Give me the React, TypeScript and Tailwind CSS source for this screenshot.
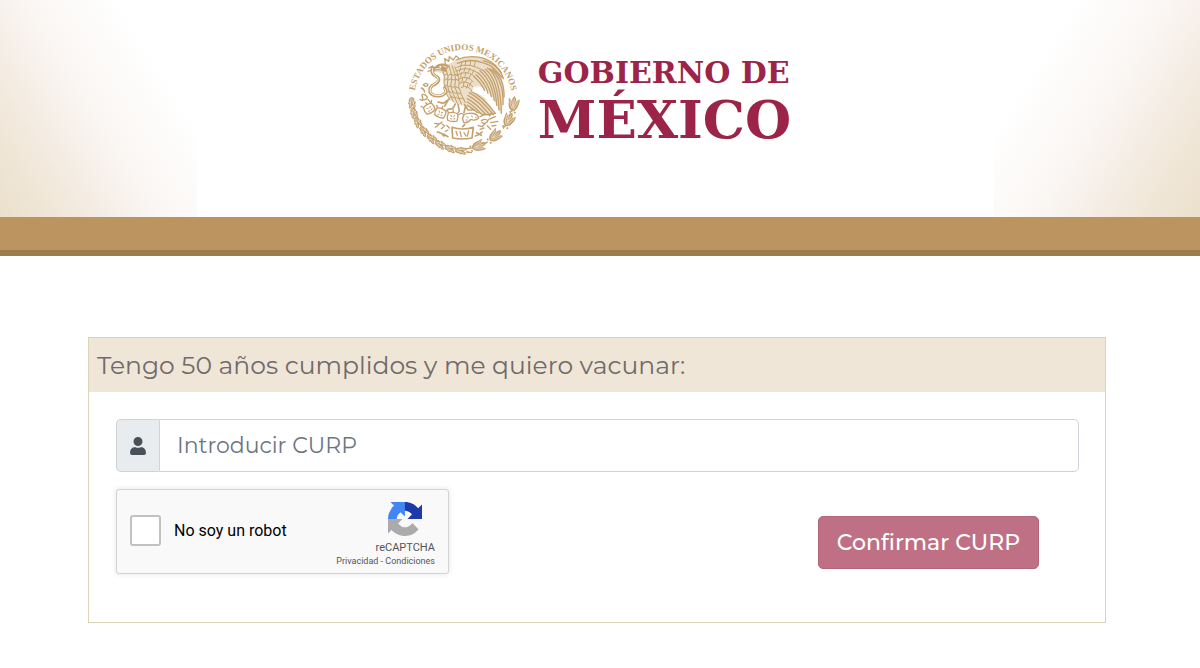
import { useState } from "react";

const GOLD = "#c4a06c";

type Sprig = { x: number; y: number; angle: number };

// oak sprigs on the left half of the wreath
const oakSprigs: Sprig[] = [
  { x: 36, y: 202, angle: 80 },
  { x: 42, y: 232, angle: 70 },
  { x: 54, y: 260, angle: 60 },
  { x: 73, y: 286, angle: 48 },
  { x: 96, y: 308, angle: 38 },
  { x: 122, y: 326, angle: 28 },
  { x: 152, y: 338, angle: 16 },
  { x: 184, y: 344, angle: 4 },
];

// laurel on the right half, each cluster opening away from the ribbon
const laurelSprigs: Sprig[] = [
  { x: 341, y: 203, angle: -82 },
  { x: 327, y: 250, angle: -64 },
  { x: 287, y: 298, angle: -42 },
  { x: 238, y: 329, angle: -20 },
];

const wingFeathers = [
  "M168 72Q212 54 254 68Q296 84 309 124",
  "M172 82Q208 66 248 80Q270 86 284 100L310 128",
  "M250 74Q288 84 304 112",
  "M262 96Q302 122 304 232",
  "M256 100Q294 130 297 222",
  "M248 102Q286 134 290 208",
  "M240 104Q276 134 283 194",
  "M234 110Q266 138 274 182",
  "M228 116Q256 140 264 172",
  "M222 122Q244 140 254 164",
  "M270 98Q312 130 309 206",
  "M278 100Q314 128 312 184",
];

const covertFeathers = [
  "M170 94q20-10 40-6q20 4 36 14",
  "M168 106q22-12 42-6q12 4 22 10",
  "M170 118q20-12 38-6q10 4 18 12",
  "M174 130q16-10 30-4q10 4 16 12",
  "M178 142q14-8 26-2q8 4 14 12",
  "M184 154q10-6 20 0q8 4 12 10",
  "M186 78l-4 14M198 75l-3 14M212 74l-2 14M226 78l-4 14",
  "M182 96l-4 12M196 94l-4 12M210 97l-5 12M222 102l-6 12",
  "M184 110l-2 12M198 109l-3 12M212 116l-6 12",
  "M188 124l-2 12M202 124l-5 12M214 138l-6 12",
  "M192 138l-2 12M204 144l-4 12",
];

const tailFeathers = [
  "M214 166Q248 182 286 232",
  "M208 170Q244 190 280 236",
  "M204 178Q238 196 270 238",
  "M202 188Q230 204 258 236",
  "M202 198Q222 210 244 234",
  "M202 208Q216 216 230 228",
  "M286 232Q258 242 230 228",
];

const bodyFeathers = [
  "M128 102Q136 122 132 140Q134 170 150 192",
  "M138 98Q148 122 142 146Q146 172 160 198",
  "M148 94Q160 122 152 148Q158 174 172 202",
  "M156 90Q172 124 164 150Q172 176 184 204",
  "M164 92Q182 128 176 152Q182 174 196 200",
  "M132 118q8-8 14 0q8-8 14 0q8-6 14 0",
  "M134 132q8-8 12 0q8-8 14 0q8-6 16 2",
  "M134 150q8-6 12 2q8-6 12 2q8-6 18 2",
  "M142 168q6-6 12 2q8-6 12 2q8-4 16 2",
  "M150 184q6-6 12 2q8-6 12 2q8-4 18 2",
];

const cactusPads = [
  { x: 88, y: 218, angle: -30 },
  { x: 121, y: 231, angle: 20 },
  { x: 158, y: 243, angle: 5 },
];

function OakSprig({ x, y, angle }: Sprig) {
  return (
    <g transform={`translate(${x} ${y}) rotate(${angle})`}>
      <path
        d="M-19 -1Q-15 -12 -7 -8Q-2 -15 4 -9Q12 -12 18 -3Q12 -1 6 0Q13 3 16 9Q8 14 3 9Q-3 14 -8 8Q-15 9 -19 -1Z"
        fill={GOLD}
      />
      <path
        d="M-14 -1Q-2 -5 11 -5M-12 2Q-2 2 9 7M-5 -9l3 6M-5 9l3-5"
        stroke="#fff"
        strokeWidth="1.5"
      />
      <circle cx="18" cy="3" r="3" fill={GOLD} />
    </g>
  );
}

function LaurelSprig({ x, y, angle }: Sprig) {
  return (
    <g transform={`translate(${x} ${y}) rotate(${angle})`}>
      <path
        d="M-24 0Q-18 -16 2 -15L16 -17Q12 -11 7 -7Q16 -8 23 0Q16 6 7 7Q12 10 16 16Q4 18 -6 14Q-18 12 -24 0Z"
        fill={GOLD}
      />
      <path
        d="M-18 0H14M-15 -4Q-5 -10 8 -12M-15 4Q-5 10 8 12M-10 -1Q-2 -5 8 -6M-10 1Q-2 5 8 6"
        stroke="#fff"
        strokeWidth="1.5"
      />
      <circle cx="-26" cy="-7" r="3" fill={GOLD} />
      <circle cx="-26" cy="7" r="3" fill={GOLD} />
    </g>
  );
}

function Emblem() {
  return (
    <svg
      className="h-[126px] w-[126px] shrink-0"
      viewBox="0 0 378 378"
      fill="none"
      strokeLinecap="round"
      strokeLinejoin="round"
      role="img"
      aria-label="Escudo Nacional"
    >
      <path id="motto" d="M43 188A146 146 0 0 1 335 188" />
      <text fill={GOLD} fontFamily="Liberation Serif, serif" fontSize="27" fontWeight="bold">
        <textPath href="#motto" startOffset="50%" textAnchor="middle">
          ESTADOS UNIDOS MEXICANOS
        </textPath>
      </text>

      {/* soft fill under the plumage */}
      <path
        d="M166 74Q212 52 258 70Q312 92 312 180L304 234L282 190Q262 152 230 150L286 232Q240 242 200 210Q168 208 148 188Q126 160 132 116Q118 106 104 108Q90 94 106 92Q120 78 146 84Z"
        fill="#ecdfc9"
      />

      {/* wings and tail */}
      <g stroke={GOLD} strokeWidth="4">
        {[...wingFeathers, ...tailFeathers].map((d) => (
          <path key={d} d={d} />
        ))}
      </g>
      <g stroke={GOLD} strokeWidth="3">
        {[...covertFeathers, ...bodyFeathers].map((d) => (
          <path key={d} d={d} />
        ))}
      </g>
      <path
        d="M136 84L134 68L146 76L148 62L160 72L168 60L178 68"
        stroke={GOLD}
        strokeWidth="4"
      />
      <path d="M222 152Q262 156 288 222Q266 184 216 166Z" fill="#fff" />

      {/* head */}
      <path
        d="M98 112Q90 98 104 92Q118 78 138 84L150 90Q140 96 138 108Q124 104 112 102Q102 104 98 112Z"
        fill={GOLD}
      />
      <circle cx="121" cy="92" r="3" fill="#fff" />
      <path d="M106 99q8-4 16 0M130 90l10 4" stroke="#fff" strokeWidth="2" />

      {/* snake */}
      <path
        d="M97 94Q92 114 110 122Q124 132 106 144Q86 152 90 168Q98 184 126 178Q144 170 134 156"
        stroke={GOLD}
        strokeWidth="10"
      />
      <path
        d="M97 98Q95 114 111 123Q120 132 105 143Q87 152 91 168Q98 182 126 177Q142 170 134 158"
        stroke="#fff"
        strokeWidth="3"
      />
      <path d="M86 96l12-6M84 106l10-4" stroke={GOLD} strokeWidth="4" />

      {/* prickly pears on the left */}
      <path
        d="M70 146q8-8 14 0q-4 10-14 0M64 156q8 2 10 12M66 176q10-4 16 8q-6 12-14 4zM84 190l8 10M60 190l8 4"
        stroke={GOLD}
        strokeWidth="4"
      />

      {/* talons */}
      <path
        d="M146 190l-16 12-16-4M144 194l-10 16M166 204l-8 14-14 2M174 206l4 18M194 206l10 16 18 0M196 212l-4 18"
        stroke={GOLD}
        strokeWidth="5"
      />

      {/* nopal */}
      <g stroke={GOLD} strokeWidth="4">
        {cactusPads.map(({ x, y, angle }) => (
          <g key={x} transform={`translate(${x} ${y}) rotate(${angle})`}>
            <path d="M-14 -11Q0 -17 14 -11Q18 0 14 11Q0 16 -14 11Q-18 0 -14 -11Z" fill="#fff" />
            <path d="M-6 -5l3 4M6 -5l-3 4M-6 6h4M4 6l3-2" strokeWidth="3" />
            <path d="M-14 -13l-4-5M0 -15v-6M14 -13l4-5" />
          </g>
        ))}
        <path d="M188 250Q188 232 206 232Q232 230 236 246Q226 256 212 250Q204 262 192 260Z" fill="#fff" />
        <path d="M200 242l5 3M214 240l4 3M226 244l3 2M198 252h4" strokeWidth="3" />
        <path d="M176 236q8-8 14 0M240 242l14-6M244 254q12-8 20 0q-6 12-18 6M266 250l20-8M272 260l22-4M268 240l4-8" />
        <path d="M104 262l14 2 8-6M106 274l10-8M124 278l10-8-8-6M140 268l8 8M136 286l8-4" />
        <path d="M234 268l12 4 8-8M240 280l12-4M262 270l10 10M276 270l12-2" />
      </g>

      {/* stone over the water */}
      <path
        d="M156 274Q186 284 220 274L216 306Q186 312 158 306Z"
        fill="#fff"
        stroke={GOLD}
        strokeWidth="5"
      />
      <path
        d="M168 286l4 12M180 286l4 16M192 290l6 10M206 284l-4 16"
        stroke={GOLD}
        strokeWidth="4"
      />
      <path
        d="M112 288q14 2 20 12M130 294l14 8M226 300q12-2 20-12M230 290l14 8M194 266l-6 6"
        stroke={GOLD}
        strokeWidth="5"
      />

      {/* wreath */}
      {oakSprigs.map((sprig) => (
        <OakSprig key={sprig.x} {...sprig} />
      ))}
      {laurelSprigs.map((sprig) => (
        <LaurelSprig key={sprig.x} {...sprig} />
      ))}
      <path d="M200 338l14-2M202 348l12 2M310 276l6-8M262 318l-6 4M334 226l2-6" stroke={GOLD} strokeWidth="4" />
    </svg>
  );
}

function RecaptchaLogo() {
  return (
    <svg className="h-[34px] w-[34px]" viewBox="0 0 64 64" aria-hidden="true">
      <path
        d="M64 31.955l-.033-1.37V4.687l-7.16 7.16C50.948 4.674 42.033.093 32.05.093c-10.4 0-19.622 4.96-25.458 12.64l11.736 11.86a15.55 15.55 0 0 1 4.754-5.334c2.05-1.6 4.952-2.906 8.968-2.906.485 0 .86.057 1.135.163 4.976.393 9.288 3.14 11.828 7.124l-8.307 8.307L64 31.953"
        fill="#1c3aa9"
      />
      <path
        d="M31.862.094l-1.37.033H4.594l7.16 7.16C4.58 13.147 0 22.06 0 32.046c0 10.4 4.96 19.622 12.64 25.458L24.5 45.768a15.55 15.55 0 0 1-5.334-4.754c-1.6-2.05-2.906-4.952-2.906-8.968 0-.485.057-.86.163-1.135.393-4.976 3.14-9.288 7.124-11.828l8.307 8.307L31.86.095"
        fill="#4285f4"
      />
      <path
        d="M.001 32.045l.033 1.37v25.898l7.16-7.16c5.86 7.173 14.774 11.754 24.76 11.754 10.4 0 19.622-4.96 25.458-12.64l-11.736-11.86a15.55 15.55 0 0 1-4.754 5.334c-2.05 1.6-4.952 2.906-8.968 2.906-.485 0-.86-.057-1.135-.163-4.976-.393-9.288-3.14-11.828-7.124l8.307-8.307c-10.522.04-22.4.066-27.295-.005"
        fill="#ababab"
      />
    </svg>
  );
}

function Header() {
  return (
    <header>
      <div className="flex h-[217px] justify-between bg-white">
        <div className="w-[197px] bg-[linear-gradient(58deg,#ebe0ca_0%,#f3eadf_25%,#faf6f3_48%,#ffffff_76%)]" />
        <div className="flex items-start gap-3 pt-9">
          <Emblem />
          <h1 className="flex flex-col pt-[19px] font-['DejaVu_Serif',serif] font-bold whitespace-nowrap text-[#9d2449]">
            <span className="text-[30px] leading-9">GOBIERNO DE</span>
            <span className="text-[53px] leading-[56px]">MÉXICO</span>
          </h1>
        </div>
        <div className="w-[206px] bg-[linear-gradient(-58deg,#ebe0ca_0%,#f3eadf_25%,#faf6f3_48%,#ffffff_76%)]" />
      </div>
      <div className="h-[39px] border-b-6 border-[#9c7e4d] bg-[#bb945f]" />
    </header>
  );
}

function Recaptcha() {
  const [checked, setChecked] = useState(false);

  return (
    <div className="flex h-[85px] w-[333px] justify-between rounded-[3px] border border-[#d3d3d3] bg-[#f9f9f9] pr-[13px] pl-[13px] font-[Roboto,sans-serif] shadow-[0_0_4px_1px_rgba(0,0,0,0.08)]">
      <label className="flex items-center gap-[13px] pb-[2px] text-base text-black">
        <input
          type="checkbox"
          checked={checked}
          onChange={(e) => setChecked(e.target.checked)}
          className="h-[31px] w-[31px] appearance-none rounded-[3px] border-2 border-[#c1c1c1] bg-white checked:bg-[#4285f4]"
        />
        No soy un robot
      </label>
      <div className="flex flex-col items-end pt-3 text-[#555555]">
        <div className="pr-[13px]">
          <RecaptchaLogo />
        </div>
        <span className="pt-[5px] text-[11px] leading-[14px]">reCAPTCHA</span>
        <span className="text-[9px] leading-3 whitespace-nowrap">
          <a href="#privacidad">Privacidad</a> - <a href="#condiciones">Condiciones</a>
        </span>
      </div>
    </div>
  );
}

export default function App() {
  const [curp, setCurp] = useState("");

  return (
    <div className="min-h-screen bg-white font-['Montserrat','Inter',sans-serif]">
      <Header />

      <main className="pt-[81px] pr-[94px] pb-11 pl-22">
        <form
          className="border border-[#ddd3b8]"
          onSubmit={(e) => e.preventDefault()}
        >
          <h2 className="bg-[#efe6d7] px-2 py-[9px] text-[25px] leading-9 text-[#706b6b]">
            Tengo 50 años cumplidos y me quiero vacunar:
          </h2>

          <div className="pt-[27px] pr-[26px] pb-12 pl-[27px]">
            <div className="flex h-[53px]">
              <label
                htmlFor="curp"
                className="flex w-[43px] items-center justify-center rounded-l-[5px] border border-r-0 border-[#ced4da] bg-[#e9ecef] text-[#495057]"
              >
                <svg
                  className="h-[18px] w-4"
                  viewBox="0 0 448 512"
                  fill="currentColor"
                  role="img"
                  aria-label="CURP"
                >
                  <path d="M224 256c70.7 0 128-57.3 128-128S294.7 0 224 0 96 57.3 96 128s57.3 128 128 128zm89.6 32h-16.7c-22.2 10.2-46.9 16-72.9 16s-50.6-5.8-72.9-16h-16.7C60.2 288 0 348.2 0 422.4V464c0 26.5 21.5 48 48 48h352c26.5 0 48-21.5 48-48v-41.6c0-74.2-60.2-134.4-134.4-134.4z" />
                </svg>
              </label>
              <input
                id="curp"
                type="text"
                placeholder="Introducir CURP"
                value={curp}
                onChange={(e) => setCurp(e.target.value)}
                className="min-w-0 flex-1 rounded-r-[5px] border border-[#ced4da] bg-white px-[17px] text-[22px] text-[#495057] placeholder:text-[#6c757d]"
              />
            </div>

            <div className="flex items-start justify-between pt-[17px]">
              <Recaptcha />
              <button
                type="submit"
                className="mt-[27px] mr-10 h-[53px] w-[221px] rounded-[5px] border border-[#b3657c] bg-[#c07085] text-[22px] font-medium whitespace-nowrap text-white"
              >
                Confirmar CURP
              </button>
            </div>
          </div>
        </form>
      </main>
    </div>
  );
}
